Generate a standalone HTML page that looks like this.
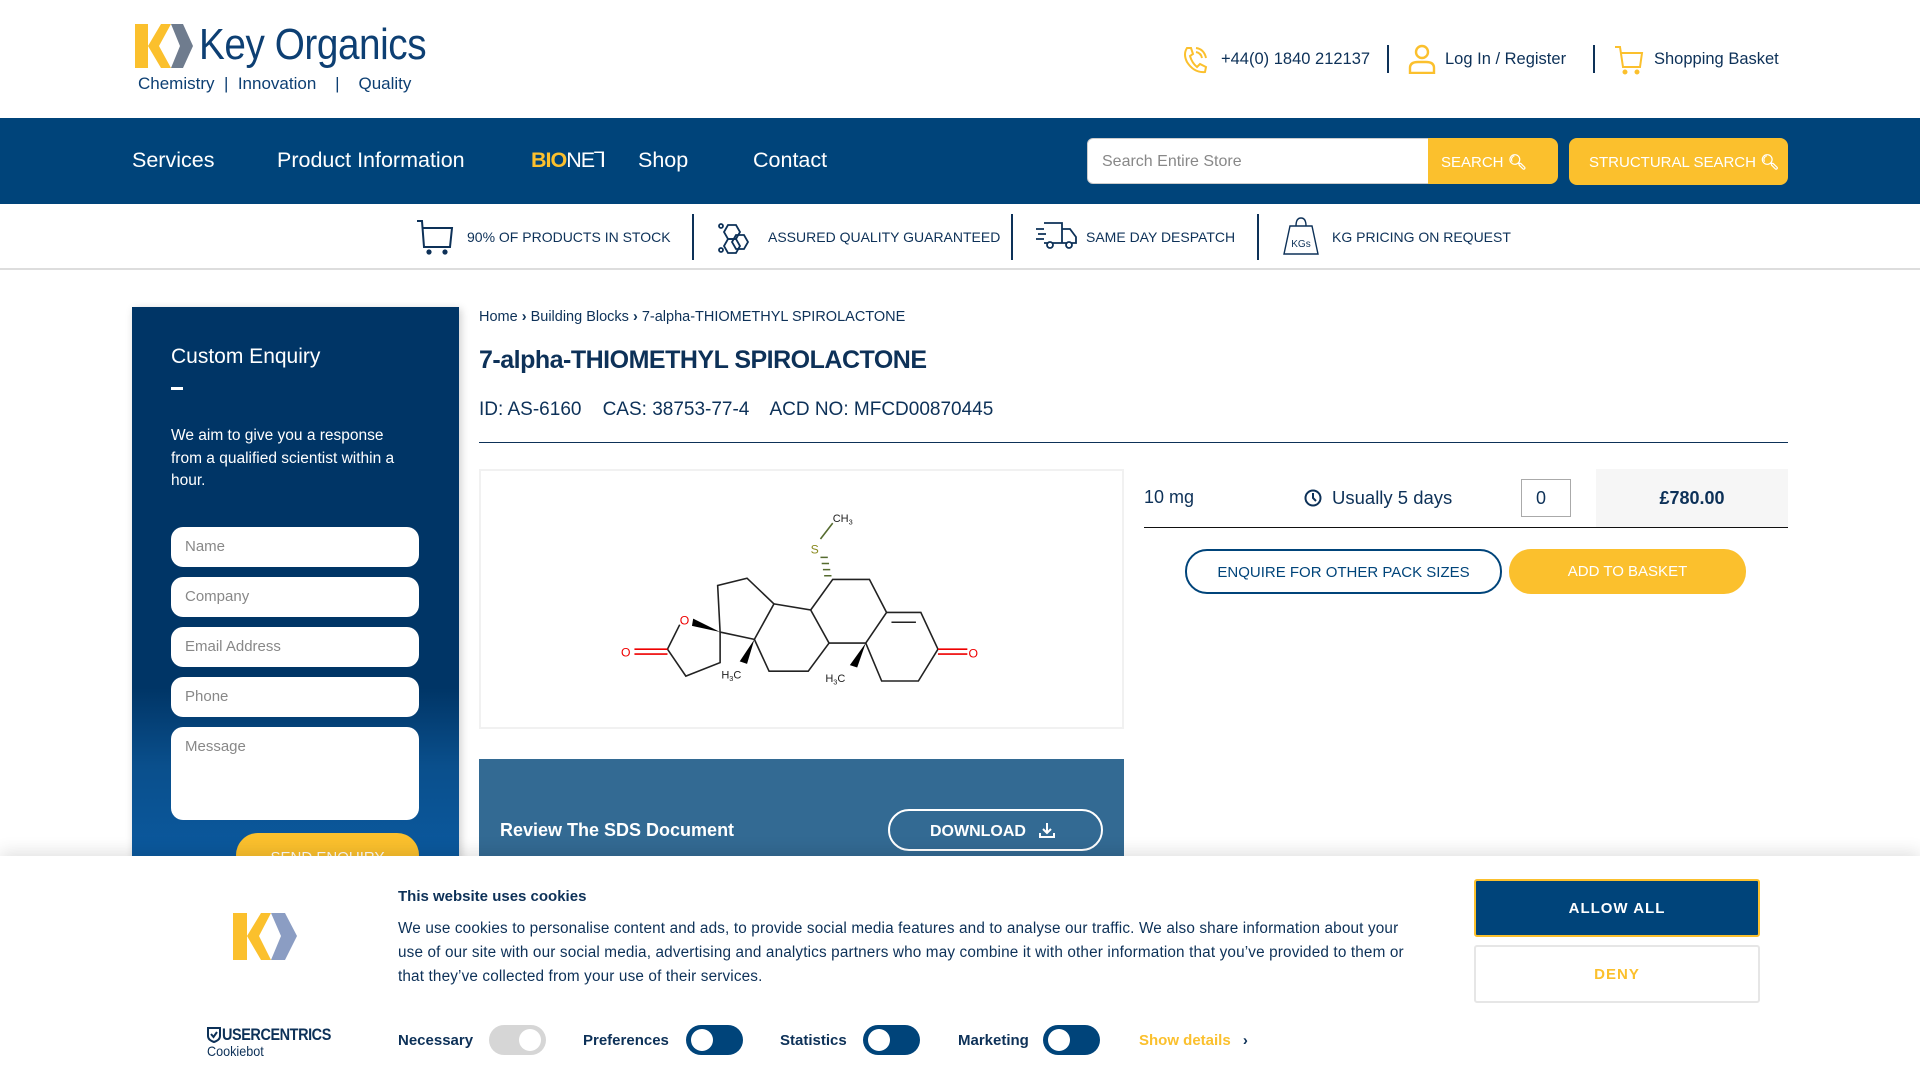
<!DOCTYPE html>
<html><head><meta charset="utf-8">
<style>
*{margin:0;padding:0;box-sizing:border-box}
body{width:1920px;height:1080px;overflow:hidden;position:relative;background:#fff;font-family:"Liberation Sans",sans-serif;color:#0d3158}
.a{position:absolute;white-space:nowrap}
.nav{position:absolute;left:0;top:118px;width:1920px;height:86px;background:#00447a}
.nav .t{position:absolute;top:30px;color:#fff;font-size:21.5px}
.feat{position:absolute;top:204px;left:0;width:1920px;height:66px;border-bottom:2px solid #ddd;background:#fff}
.feat .t{position:absolute;top:25px;font-size:14px;color:#0d3158}
.feat .sep{position:absolute;top:10px;width:2px;height:46px;background:#0d3158}
.side{position:absolute;left:132px;top:307px;width:327px;height:560px;background:linear-gradient(#003566 0%,#003566 68%,#0a4f8c 82%,#0b5aa0 100%);box-shadow:2px 2px 8px rgba(0,0,0,.2)}
.inp{position:absolute;left:39px;width:248px;height:40px;background:#fff;border-radius:12px;color:#888;font-size:15px;padding:11px 14px}
.tog{position:absolute;width:57px;height:30px;border-radius:15px;background:#00447a}
.tog:after{content:"";position:absolute;left:5px;top:4px;width:22px;height:22px;border-radius:50%;background:#fff}
.tog.n{background:#d6d6d6}.tog.n:after{left:30px}
</style></head><body>

<svg class="a" style="left:135px;top:24px" width="60" height="44" viewBox="0 0 60 44">
<polygon points="0,0 13,0 13,44 0,44" fill="#fbc02d"/>
<polygon points="13,22 26,0 36,0 24,22 36,44 26,44" fill="#fbc02d"/>
<polygon points="36,0 48,0 58,22 48,44 36,44 45,22" fill="#6f7c8e"/>
</svg>
<div class="a" style="left:199px;top:20px;font-size:44px;color:#0d3f73;letter-spacing:-0.5px;transform:scaleX(0.88);transform-origin:left">Key Organics</div>
<div class="a" style="left:138px;top:74px;font-size:17px;color:#0d3f73">Chemistry &nbsp;| &nbsp;Innovation &nbsp;&nbsp; | &nbsp;&nbsp; Quality</div>

<svg class="a" style="left:1182px;top:46px" width="26" height="28" viewBox="0 0 26 28" fill="none" stroke="#fbc02d" stroke-width="2"><path d="M5 2 L9 2 L11 8 L8 10 Q10 17 15 21 L18 18 L24 21 L23 26 Q12 27 5 16 Q1 8 5 2Z"/><path d="M14 6 Q19 7 20 12 M14 2 Q22 3 24 12"/></svg>
<div class="a" style="left:1221px;top:50px;font-size:16.5px">+44(0) 1840 212137</div>
<div class="a" style="left:1387px;top:45px;width:2px;height:28px;background:#0d3158"></div>
<svg class="a" style="left:1408px;top:44px" width="28" height="30" viewBox="0 0 28 30" fill="none" stroke="#fbc02d" stroke-width="2.4"><circle cx="14" cy="8" r="6"/><path d="M2 29 L2 24 Q2 18 10 18 L18 18 Q26 18 26 24 L26 29Z"/></svg>
<div class="a" style="left:1445px;top:50px;font-size:16.5px">Log In / Register</div>
<div class="a" style="left:1593px;top:45px;width:2px;height:28px;background:#0d3158"></div>
<svg class="a" style="left:1614px;top:45px" width="30" height="30" viewBox="0 0 30 30" fill="none" stroke="#fbc02d" stroke-width="2"><path d="M1 2 L6 2 L9 22 L26 22 L28 8 L7 8"/><circle cx="11" cy="27" r="1.5" fill="#fbc02d"/><circle cx="23" cy="27" r="1.5" fill="#fbc02d"/></svg>
<div class="a" style="left:1654px;top:50px;font-size:16.5px">Shopping Basket</div>

<div class="nav">
<div class="t" style="left:132px">Services</div>
<div class="t" style="left:277px">Product Information</div>
<div class="t" style="left:531px;font-weight:bold;color:#fbc02d;letter-spacing:-1px">BIO<span style="color:#fff;font-weight:normal">NE⅂</span></div>
<div class="t" style="left:638px">Shop</div>
<div class="t" style="left:753px">Contact</div>
<div class="a" style="left:1087px;top:20px;width:343px;height:46px;background:#fff;border-radius:6px 0 0 6px;border:1px solid #ccc;color:#888;font-size:16px;padding:14px 14px">Search Entire Store</div>
<div class="a" style="left:1428px;top:20px;width:130px;height:46px;background:#fbc02d;border-radius:0 8px 8px 0;color:#fff;font-size:15px;padding:15px 13px">SEARCH <span style="font-weight:bold">&#x1F50D;&#xFE0E;</span></div>
<div class="a" style="left:1569px;top:20px;width:219px;height:47px;background:#fbc02d;border-radius:8px;color:#fff;font-size:15px;padding:15px 20px">STRUCTURAL SEARCH <span style="font-weight:bold">&#x1F50D;&#xFE0E;</span></div>
</div>

<div class="feat">
<svg class="a" style="left:416px;top:15px" width="38" height="36" viewBox="0 0 38 36" fill="none" stroke="#0d3158" stroke-width="2"><path d="M1 2 L6 2 L8 28 L34 28 L36 9 L7 9"/><circle cx="13" cy="33" r="1.6" fill="#0d3158"/><circle cx="29" cy="33" r="1.6" fill="#0d3158"/></svg>
<div class="t" style="left:467px">90% OF PRODUCTS IN STOCK</div>
<div class="sep" style="left:692px"></div>
<svg class="a" style="left:716px;top:14px" width="38" height="38" viewBox="0 0 38 38" fill="none" stroke="#0d3158" stroke-width="1.8"><polygon points="12,7 20,7 24,14 20,21 12,21 8,14"/><polygon points="22,7 30,7 34,14 30,21 22,21 18,14" transform="translate(-2,10)"/><polygon points="12,21 20,21 24,28 20,35 12,35 8,28"/><circle cx="5" cy="8" r="2"/><circle cx="5" cy="32" r="2"/></svg>
<div class="t" style="left:768px">ASSURED QUALITY GUARANTEED</div>
<div class="sep" style="left:1011px"></div>
<svg class="a" style="left:1034px;top:17px" width="44" height="30" viewBox="0 0 44 30" fill="none" stroke="#0d3158" stroke-width="1.8"><path d="M10 2 L28 2 L28 22 L10 22 M28 8 L36 8 L42 16 L42 22 L28 22"/><circle cx="16" cy="24" r="3" fill="#fff"/><circle cx="35" cy="24" r="3" fill="#fff"/><path d="M2 8 L10 8 M4 13 L12 13 M2 18 L10 18"/></svg>
<div class="t" style="left:1086px">SAME DAY DESPATCH</div>
<div class="sep" style="left:1257px"></div>
<svg class="a" style="left:1282px;top:12px" width="38" height="40" viewBox="0 0 38 40" fill="none" stroke="#0d3158" stroke-width="1.4"><path d="M14 10 Q14 2 19 2 Q24 2 24 10"/><path d="M8 10 L30 10 L36 38 L2 38Z"/><text x="19" y="31" font-size="10" text-anchor="middle" fill="#0d3158" stroke="none" font-family="Liberation Sans">KGs</text></svg>
<div class="t" style="left:1332px">KG PRICING ON REQUEST</div>
</div>

<div class="side">
<div class="a" style="left:39px;top:38px;font-size:21px;color:#fff">Custom Enquiry</div>
<div class="a" style="left:39px;top:80px;width:12px;height:3px;background:#fff"></div>
<div class="a" style="left:39px;top:118px;width:238px;white-space:normal;font-size:15.5px;line-height:22.5px;color:#fff">We aim to give you a response from a qualified scientist within a hour.</div>
<div class="inp" style="top:220px">Name</div>
<div class="inp" style="top:270px">Company</div>
<div class="inp" style="top:320px">Email Address</div>
<div class="inp" style="top:370px">Phone</div>
<div class="inp" style="top:420px;height:93px">Message</div>
<div class="a" style="left:104px;top:526px;width:183px;height:44px;border-radius:22px;background:#fbc02d;color:#fff;font-size:15px;text-align:center;padding-top:16px">SEND ENQUIRY</div>
</div>

<div class="a" style="left:479px;top:309px;font-size:14.5px">Home <b>›</b> Building Blocks <b>›</b> 7-alpha-THIOMETHYL SPIROLACTONE</div>
<div class="a" style="left:479px;top:346px;font-size:25px;font-weight:bold;letter-spacing:-0.5px">7-alpha-THIOMETHYL SPIROLACTONE</div>
<div class="a" style="left:479px;top:399px;font-size:19px">ID: AS-6160 &nbsp;&nbsp; CAS: 38753-77-4 &nbsp;&nbsp; ACD NO: MFCD00870445</div>
<div class="a" style="left:479px;top:442px;width:1309px;height:1px;background:#0d3158"></div>

<div class="a" style="left:479px;top:469px;width:645px;height:260px;border:2px solid #f1f1f1"></div>
<svg class="a" style="left:479px;top:469px" width="645" height="260" viewBox="391 383 527 212" fill="none" stroke="#222" stroke-width="1.3">
<path d="M588 516 L586 478 L610 472 L632 493 L616 522 Z"/>
<path d="M616 522 L628 548 L660 548 L677 525 L662 498 L632 493"/>
<path d="M662 498 L680 473 L710 473 L724 500 L707 525 L677 525"/>
<path d="M724 500 L752 500 L766 530 L750 556 L720 556 L707 525"/>
<path d="M728 508 L748 508"/>
<path d="M588 516 L588 541 L560 552 L545 530 L555 510"/>
<path d="M545 530 L518 530 M545 534 L518 534" stroke="#e00"/>
<path d="M766 530 L790 530 M766 534 L790 534" stroke="#e00"/>
<path d="M670 440 L680 427" stroke="#556b2f"/>
<path d="M679 470 L673 470 M678 465 L672 465 M677 460 L671 460 M676 455 L670 455" stroke="#556b2f"/>
<polygon points="588,516 566,505 565,511" fill="#000" stroke="none"/>
<polygon points="616,522 604,540 610,542" fill="#000" stroke="none"/>
<polygon points="707,525 694,543 700,545" fill="#000" stroke="none"/>
<g font-family="Liberation Sans" font-size="10" stroke="none">
<text x="555" y="510" fill="#e00">O</text>
<text x="507" y="536" fill="#e00">O</text>
<text x="791" y="537" fill="#e00">O</text>
<text x="662" y="452" fill="#8a8a20">S</text>
<text x="680" y="426" fill="#222" font-size="9">CH<tspan font-size="6" dy="2">3</tspan></text>
<text x="589" y="554" fill="#222" font-size="9">H<tspan font-size="6" dy="2">3</tspan><tspan dy="-2">C</tspan></text>
<text x="674" y="557" fill="#222" font-size="9">H<tspan font-size="6" dy="2">3</tspan><tspan dy="-2">C</tspan></text>
</g></svg>

<div class="a" style="left:1144px;top:487px;font-size:18px">10 mg</div>
<svg class="a" style="left:1304px;top:489px" width="18" height="18" viewBox="0 0 18 18" fill="none" stroke="#0d3158" stroke-width="2"><circle cx="9" cy="9" r="7.5"/><path d="M9 4 L9 9 L12 12"/></svg>
<div class="a" style="left:1332px;top:487px;font-size:18.5px">Usually 5 days</div>
<div class="a" style="left:1521px;top:479px;width:50px;height:38px;border:1px solid #aaa;font-size:18px;padding:8px 0 0 14px">0</div>
<div class="a" style="left:1596px;top:469px;width:192px;height:58px;background:#f6f6f6;font-size:18px;font-weight:bold;text-align:center;padding-top:19px">£780.00</div>
<div class="a" style="left:1144px;top:527px;width:644px;height:1px;background:#111"></div>
<div class="a" style="left:1185px;top:549px;width:317px;height:45px;border:2px solid #00447a;border-radius:22px;font-size:15px;color:#00447a;text-align:center;padding-top:13px">ENQUIRE FOR OTHER PACK SIZES</div>
<div class="a" style="left:1509px;top:549px;width:237px;height:45px;background:#fbc02d;border-radius:22px;font-size:15px;color:#fff;text-align:center;padding-top:14px">ADD TO BASKET</div>

<div class="a" style="left:479px;top:759px;width:645px;height:120px;background:#336a93"></div>
<div class="a" style="left:500px;top:820px;font-size:18px;font-weight:bold;color:#fff">Review The SDS Document</div>
<div class="a" style="left:888px;top:809px;width:215px;height:42px;border:2px solid #fff;border-radius:21px;color:#fff;font-size:16px;font-weight:bold;padding:10px 0 0 40px">DOWNLOAD
<svg style="vertical-align:-3px;margin-left:8px" width="18" height="18" viewBox="0 0 18 18" fill="none" stroke="#fff" stroke-width="2"><path d="M9 2 L9 12 M5 8 L9 12 L13 8 M2 12 L2 16 L16 16 L16 12"/></svg></div>

<div class="a" style="left:0;top:856px;width:1920px;height:224px;background:#fff;box-shadow:0 -4px 16px rgba(0,0,0,.12)"></div>
<svg class="a" style="left:233px;top:913px" width="66" height="47" viewBox="0 0 66 47">
<polygon points="0,0 14,0 14,47 0,47" fill="#fbc02d"/>
<polygon points="14,23 28,0 38,0 26,23 38,47 28,47" fill="#fbc02d"/>
<polygon points="38,0 52,0 64,23 52,47 38,47 48,23" fill="#8b9dc3"/>
</svg>
<div class="a" style="left:398px;top:888px;font-size:15px;font-weight:bold;color:#0d3158">This website uses cookies</div>
<div class="a" style="left:398px;top:917px;width:1020px;white-space:normal;font-size:15.3px;line-height:24px;color:#0d3158;letter-spacing:0.15px">We use cookies to personalise content and ads, to provide social media features and to analyse our traffic. We also share information about your use of our site with our social media, advertising and analytics partners who may combine it with other information that you’ve provided to them or that they’ve collected from your use of their services.</div>
<div class="a" style="left:1474px;top:879px;width:286px;height:58px;background:#00447a;border:2px solid #fbc02d;border-radius:3px;color:#fff;font-size:15px;font-weight:bold;text-align:center;padding-top:19px;letter-spacing:1px">ALLOW ALL</div>
<div class="a" style="left:1474px;top:945px;width:286px;height:58px;background:#fff;border:2px solid #e6e6e6;border-radius:3px;color:#fbc02d;font-size:15px;font-weight:bold;text-align:center;padding-top:19px;letter-spacing:1px">DENY</div>
<svg class="a" style="left:207px;top:1027px" width="14" height="16" viewBox="0 0 14 16" fill="none" stroke="#0d3158" stroke-width="2"><path d="M1 1 L13 1 L13 9 Q13 13 7 15 Q1 13 1 9Z"/><path d="M4 7 L6.5 10 L10 5"/></svg>
<div class="a" style="left:222px;top:1025px;font-size:17px;font-weight:bold;color:#0d3158;letter-spacing:-0.5px;transform:scaleX(0.85);transform-origin:left">USERCENTRICS</div>
<div class="a" style="left:207px;top:1043px;font-size:14px;color:#0d3158;transform:scaleX(0.9);transform-origin:left">Cookiebot</div>
<div class="a" style="left:398px;top:1032px;font-size:15px;font-weight:bold">Necessary</div>
<div class="tog n" style="left:489px;top:1025px"></div>
<div class="a" style="left:583px;top:1032px;font-size:15px;font-weight:bold">Preferences</div>
<div class="tog" style="left:686px;top:1025px"></div>
<div class="a" style="left:780px;top:1032px;font-size:15px;font-weight:bold">Statistics</div>
<div class="tog" style="left:863px;top:1025px"></div>
<div class="a" style="left:958px;top:1032px;font-size:15px;font-weight:bold">Marketing</div>
<div class="tog" style="left:1043px;top:1025px"></div>
<div class="a" style="left:1139px;top:1032px;font-size:15px;font-weight:bold;color:#fbc02d">Show details <span style="color:#0d3158;margin-left:8px">›</span></div>
</body></html>
